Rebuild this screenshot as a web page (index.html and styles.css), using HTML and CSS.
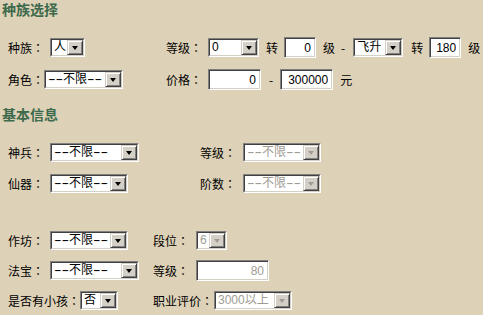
FILE: index.html
```html
<!DOCTYPE html>
<html lang="zh-Hant">

<head>
    <meta charset="UTF-8">
    <title>搜索</title>
    <link rel="stylesheet" href="styles.css">
</head>

<body>
    <div class="page">
        <h2 class="title">种族选择</h2>
        <div class="row r1">
            <span class="lab c1">种族：</span>
            <span class="sel w35"><span class="sel-in"><span class="val">人</span><span class="btn"></span></span></span>
            <span class="lab c2">等级：</span>
            <span class="sel w51"><span class="sel-in"><span class="val">0</span><span class="btn"></span></span></span>
            <span class="lab m7">转</span>
            <input class="txt w32 m6" type="text" value="0">
            <span class="lab m7">级</span>
            <span class="lab m6">-</span>
            <span class="sel w50 m8"><span class="sel-in"><span class="val">飞升</span><span class="btn"></span></span></span>
            <span class="lab m8">转</span>
            <input class="txt w32 m6" type="text" value="180">
            <span class="lab m7">级</span>
        </div>
        <div class="row r2">
            <span class="lab c1n">角色：</span>
            <span class="sel w79"><span class="sel-in"><span class="val"><span class="dash">--</span>不限<span class="dash">--</span></span><span class="btn"></span></span></span>
            <span class="lab c2b">价格：</span>
            <input class="txt w53" type="text" value="0">
            <span class="lab m8">-</span>
            <input class="txt w53 m7" type="text" value="300000">
            <span class="lab m7">元</span>
        </div>

        <h2 class="title t2">基本信息</h2>
        <div class="row r3">
            <span class="lab c1">神兵：</span>
            <span class="sel w89"><span class="sel-in"><span class="val"><span class="dash">--</span>不限<span class="dash">--</span></span><span class="btn"></span></span></span>
            <span class="lab c3">等级：</span>
            <span class="sel w78 off"><span class="sel-in"><span class="val"><span class="dash">--</span>不限<span class="dash">--</span></span><span class="btn"></span></span></span>
        </div>
        <div class="row r4">
            <span class="lab c1">仙器：</span>
            <span class="sel w78"><span class="sel-in"><span class="val"><span class="dash">--</span>不限<span class="dash">--</span></span><span class="btn"></span></span></span>
            <span class="lab c3b">阶数：</span>
            <span class="sel w78 off"><span class="sel-in"><span class="val"><span class="dash">--</span>不限<span class="dash">--</span></span><span class="btn"></span></span></span>
        </div>

        <div class="row r5">
            <span class="lab c1">作坊：</span>
            <span class="sel w78"><span class="sel-in"><span class="val"><span class="dash">--</span>不限<span class="dash">--</span></span><span class="btn"></span></span></span>
            <span class="lab c4">段位：</span>
            <span class="sel w31 off"><span class="sel-in"><span class="val">6</span><span class="btn"></span></span></span>
        </div>
        <div class="row r6">
            <span class="lab c1">法宝：</span>
            <span class="sel w89"><span class="sel-in"><span class="val"><span class="dash">--</span>不限<span class="dash">--</span></span><span class="btn"></span></span></span>
            <span class="lab c4b">等级：</span>
            <input class="txt w73 dis" type="text" value="80" disabled>
        </div>
        <div class="row r7">
            <span class="lab">是否有小孩：</span>
            <span class="sel w38"><span class="sel-in"><span class="val">否</span><span class="btn"></span></span></span>
            <span class="lab c5">职业评价：</span>
            <span class="sel w78 off"><span class="sel-in"><span class="val">3000以上</span><span class="btn"></span></span></span>
        </div>
    </div>
</body>

</html>
```

FILE: styles.css
```css
* {
    margin: 0;
    padding: 0;
}

body {
    background-color: #ddd1b7;
    font-family: "Noto Sans CJK TC", "Liberation Sans", sans-serif;
    font-size: 12px;
    color: #000;
}

.page {
    width: 483px;
    height: 315px;
    overflow: hidden;
}

.title {
    font-family: "Noto Sans CJK SC", sans-serif;
    font-size: 14px;
    font-weight: bold;
    color: #3d6a4c;
    line-height: 18px;
    padding-left: 2px;
}

.t2 {
    margin-top: 15px;
}

.row {
    display: flex;
    align-items: center;
    height: 21px;
    padding-left: 8px;
}

.r1 {
    margin-top: 19px;
}

.r2 {
    margin-top: 11px;
}

.r3 {
    margin-top: 19px;
}

.r4 {
    margin-top: 10px;
}

.r5 {
    margin-top: 36px;
}

.r6 {
    margin-top: 9px;
}

.r7 {
    margin-top: 9px;
}

.lab {
    white-space: nowrap;
    line-height: 21px;
}

/* 列宽 */
.c1 { width: 42px; }
.c1n { width: 36px; }
.c2 { margin-left: 81px; width: 42px; }
.c2b { margin-left: 43px; width: 42px; }
.c3 { margin-left: 61px; width: 43px; }
.c3b { margin-left: 72px; width: 43px; }
.c4 { margin-left: 25px; width: 43px; }
.c4b { margin-left: 14px; width: 43px; }
.c5 { margin-left: 35px; width: 61px; }

.m4 { margin-left: 4px; }
.m6 { margin-left: 6px; }
.m7 { margin-left: 7px; }
.m8 { margin-left: 8px; }

.w31 { width: 31px; }
.w32 { width: 32px; }
.w35 { width: 35px; }
.w38 { width: 38px; }
.w50 { width: 50px; }
.w51 { width: 51px; }
.w53 { width: 53px; }
.w63 { width: 63px; }
.w73 { width: 73px; }
.w78 { width: 78px; }
.w79 { width: 79px; }
.w89 { width: 89px; }

/* 下拉框 */
.sel {
    display: inline-block;
    box-sizing: border-box;
    height: 19px;
    border: 1px solid;
    border-color: #808080 #fff #fff #808080;
    background-color: #fff;
    flex: none;
}

.sel-in {
    display: flex;
    height: 100%;
    box-sizing: border-box;
    border: 1px solid;
    border-color: #404040 #d4d0c8 #d4d0c8 #404040;
}

.sel .val {
    flex: 1;
    padding-left: 2px;
    font-family: "Liberation Sans", "Noto Sans CJK TC", sans-serif;
    line-height: 15px;
    overflow: hidden;
    white-space: nowrap;
}

/* 横线拉长一点 */
.sel .dash {
    display: inline-block;
    transform: scaleX(1.9);
    transform-origin: 0 50%;
    margin-right: 7px;
}

.sel .btn {
    position: relative;
    width: 16px;
    box-sizing: border-box;
    background-color: #d4d0c8;
    border: 1px solid;
    border-color: #d4d0c8 #404040 #404040 #d4d0c8;
    box-shadow: inset 1px 1px #fff, inset -1px -1px #808080;
}

.sel .btn::after {
    content: "";
    position: absolute;
    left: 4px;
    top: 5px;
    border-left: 3.5px solid transparent;
    border-right: 3.5px solid transparent;
    border-top: 4px solid #000;
}

.off .val {
    color: #a09c94;
}

.off .btn::after {
    border-top-color: #a09c94;
}

/* 文本框 */
.txt {
    box-sizing: border-box;
    height: 21px;
    border: 1px solid;
    border-color: #808080 #fff #fff #808080;
    box-shadow: inset 1px 1px #404040, inset -1px -1px #d4d0c8;
    background-color: #fff;
    font-family: "Liberation Sans", "Noto Sans CJK SC", sans-serif;
    font-size: 12px;
    text-align: right;
    padding: 0 4px 0 2px;
    outline: none;
    flex: none;
}

.dis {
    color: #a09c94;
}
```
